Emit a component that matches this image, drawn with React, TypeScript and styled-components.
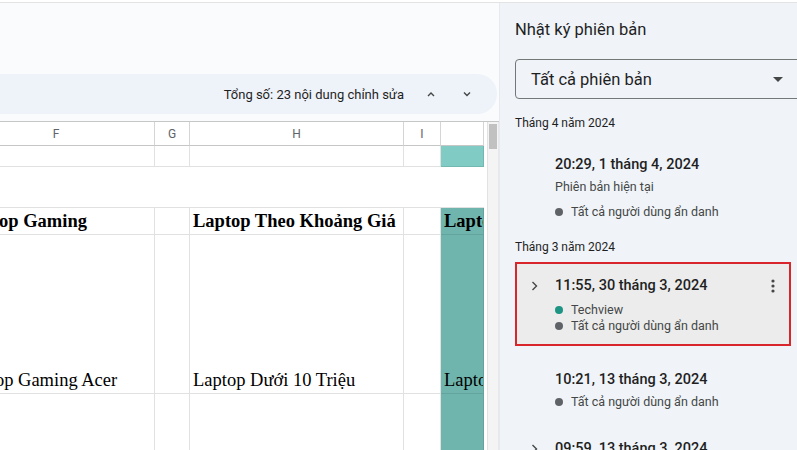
import styled, { createGlobalStyle } from "styled-components";

const Global = createGlobalStyle`
  html, body {
    margin: 0;
    padding: 0;
    background: #ffffff;
    overflow: hidden;
  }
  body {
    font-family: Roboto, "Noto Sans", Arial, sans-serif;
    color: #1f1f1f;
  }
`;

const Page = styled.div`
  width: 797px;
  height: 450px;
  padding-top: 2px;
  box-sizing: border-box;
  overflow: hidden;
`;

const Frame = styled.div`
  display: flex;
  height: 448px;
  border-top: 1px solid #e3e3e3;
`;

const Main = styled.div`
  width: 499px;
  display: flex;
  flex-direction: column;
  background: #f9fbfd;
  overflow: hidden;
`;

const TopArea = styled.div`
  height: 118px;
  flex-shrink: 0;
  display: flex;
  flex-direction: column;
  justify-content: flex-end;
  padding-bottom: 7px;
  box-sizing: border-box;
`;

const FindBar = styled.div`
  height: 40px;
  margin-left: -40px;
  margin-right: 2px;
  border-radius: 0 20px 20px 0;
  background: #eef2f9;
  display: flex;
  align-items: center;
  justify-content: flex-end;
  padding-right: 14px;
  gap: 4px;
`;

const Count = styled.span`
  font-size: 13px;
  color: #1f1f1f;
  margin-right: 7px;
`;

const NavButton = styled.button`
  width: 32px;
  height: 32px;
  border: none;
  background: transparent;
  display: flex;
  align-items: center;
  justify-content: center;
  padding: 0;
  color: #444746;
`;

const SheetWrap = styled.div`
  flex: 1;
  display: flex;
  background: #ffffff;
  border-top: 1px solid #c4c7c5;
  overflow: hidden;
`;

const Viewport = styled.div`
  flex: 1;
  overflow: hidden;
`;

const Grid = styled.div`
  display: grid;
  margin-left: -42px;
  grid-template-columns: 197px 35px 214px 37px 43px;
  grid-template-rows: 24px 21px 41px 27px 159px 80px;
`;

const HeadCell = styled.div`
  border-right: 1px solid #d5d5d5;
  border-bottom: 1px solid #c4c7c5;
  display: flex;
  align-items: center;
  justify-content: center;
  font-size: 12px;
  color: #5f6368;
  box-sizing: border-box;
`;

const Cell = styled.div<{ $fill?: string; $bold?: boolean; $bottom?: boolean; $line?: string }>`
  border-right: 1px solid ${(p) => p.$line || "#e1e1e1"};
  border-bottom: 1px solid ${(p) => p.$line || "#e1e1e1"};
  background: ${(p) => p.$fill || "#ffffff"};
  font-family: "Liberation Serif", "Times New Roman", serif;
  font-size: 18.5px;
  font-weight: ${(p) => (p.$bold ? 700 : 400)};
  color: #000;
  white-space: nowrap;
  overflow: hidden;
  display: flex;
  align-items: ${(p) => (p.$bottom ? "flex-end" : "center")};
  padding: 0 0 ${(p) => (p.$bottom ? "2px" : "0")} 3px;
  box-sizing: border-box;
`;

const MergedRow = styled.div`
  grid-column: 1 / -1;
  border-bottom: 1px solid #e1e1e1;
  background: #ffffff;
`;

const Scrollbar = styled.div`
  width: 12px;
  margin-left: 3px;
  background: #f4f4f4;
  border-left: 1px solid #e2e2e2;
  border-right: 1px solid #e8e8e8;
  padding-top: 2px;
  box-sizing: border-box;
`;

const Thumb = styled.div`
  width: 8px;
  height: 25px;
  margin-left: 1px;
  background: #c1c1c1;
`;

const Panel = styled.aside`
  flex: 1;
  background: #f0f4f9;
  border-left: 1px solid #e6e9ee;
  padding: 15px 0 0 15px;
  overflow: hidden;
  display: flex;
  flex-direction: column;
  & > * {
    flex-shrink: 0;
  }
`;

const PanelTitle = styled.h2`
  margin: 0;
  font-size: 16.5px;
  line-height: 24px;
  font-weight: 400;
  color: #1f1f1f;
`;

const Select = styled.div`
  margin-top: 17px;
  width: 300px;
  height: 40px;
  box-sizing: border-box;
  border: 1px solid #747775;
  border-radius: 4px;
  display: flex;
  align-items: center;
  padding-left: 15px;
  font-size: 16.5px;
  color: #1f1f1f;
  position: relative;
`;

const Caret = styled.span`
  position: absolute;
  left: 257px;
  top: 17px;
  width: 0;
  height: 0;
  border-left: 5px solid transparent;
  border-right: 5px solid transparent;
  border-top: 5px solid #444746;
`;

const MonthLabel = styled.div<{ $top: number }>`
  margin-top: ${(p) => p.$top}px;
  font-size: 12px;
  line-height: 16px;
  color: #1f1f1f;
`;

const Item = styled.div<{ $selected?: boolean; $top: number }>`
  margin-top: ${(p) => p.$top}px;
  width: 276px;
  box-sizing: border-box;
  display: grid;
  grid-template-columns: 38px 1fr 24px;
  padding: ${(p) => (p.$selected ? "12px 0 10px" : "11px 0 10px")};
  background: ${(p) => (p.$selected ? "#ececec" : "transparent")};
  border: 2px solid ${(p) => (p.$selected ? "#d9262c" : "transparent")};
`;

const Expander = styled.div`
  height: 20px;
  display: flex;
  align-items: center;
  padding-left: 12px;
  color: #444746;
`;

const ItemBody = styled.div`
  display: flex;
  flex-direction: column;
`;

const ItemTitle = styled.div<{ $gap?: number }>`
  font-size: 14.5px;
  line-height: 20px;
  font-weight: 500;
  color: #1f1f1f;
  margin-bottom: ${(p) => p.$gap ?? 4}px;
`;

const Current = styled.div`
  font-size: 12.5px;
  line-height: 16px;
  color: #444746;
  margin-bottom: 9px;
`;

const User = styled.div<{ $color: string }>`
  font-size: 12.5px;
  line-height: 16px;
  color: #444746;
  display: flex;
  align-items: center;
  gap: 8px;
  &::before {
    content: "";
    width: 8px;
    height: 8px;
    border-radius: 50%;
    background: ${(p) => p.$color};
  }
`;

const More = styled.div`
  height: 20px;
  display: flex;
  align-items: center;
  justify-content: center;
  color: #444746;
  padding-right: 8px;
`;

const Chevron = ({ dir }: { dir: "up" | "down" | "right" }) => {
  const pts =
    dir === "up" ? "3,8 6,5 9,8" : dir === "down" ? "3,4.5 6,7.5 9,4.5" : "3.5,2 7.5,6 3.5,10";
  return (
    <svg width="12" height="12" viewBox="0 0 12 12" aria-hidden="true">
      <polyline points={pts} fill="none" stroke="currentColor" strokeWidth="1.4" />
    </svg>
  );
};

const Dots = () => (
  <svg width="4" height="14" viewBox="0 0 4 14" aria-hidden="true">
    <circle cx="2" cy="2" r="1.6" fill="currentColor" />
    <circle cx="2" cy="7" r="1.6" fill="currentColor" />
    <circle cx="2" cy="12" r="1.6" fill="currentColor" />
  </svg>
);

const GRAY = "#5f6368";
const TEAL = "#1e9484";

export default function App() {
  return (
    <Page>
      <Global />
      <Frame>
        <Main>
          <TopArea>
            <FindBar>
              <Count>Tổng số: 23 nội dung chỉnh sửa</Count>
              <NavButton><Chevron dir="up" /></NavButton>
              <NavButton><Chevron dir="down" /></NavButton>
            </FindBar>
          </TopArea>
          <SheetWrap>
            <Viewport>
              <Grid>
                <HeadCell>F</HeadCell>
                <HeadCell>G</HeadCell>
                <HeadCell>H</HeadCell>
                <HeadCell>I</HeadCell>
                <HeadCell />

                <Cell />
                <Cell />
                <Cell />
                <Cell />
                <Cell $fill="#80cbc4" $line="#72b8b1" />

                <MergedRow />

                <Cell $bold>Laptop Gaming</Cell>
                <Cell />
                <Cell $bold>Laptop Theo Khoảng Giá</Cell>
                <Cell />
                <Cell $bold $fill="#6fb5ad" $line="#63a59e">Laptop Theo Hãng</Cell>

                <Cell $bottom>Laptop Gaming Acer</Cell>
                <Cell />
                <Cell $bottom>Laptop Dưới 10 Triệu</Cell>
                <Cell />
                <Cell $bottom $fill="#6fb5ad" $line="#63a59e">Laptop Acer</Cell>

                <Cell />
                <Cell />
                <Cell />
                <Cell />
                <Cell $fill="#6fb5ad" $line="#63a59e" />
              </Grid>
            </Viewport>
            <Scrollbar>
              <Thumb />
            </Scrollbar>
          </SheetWrap>
        </Main>

        <Panel>
          <PanelTitle>Nhật ký phiên bản</PanelTitle>
          <Select>
            Tất cả phiên bản
            <Caret />
          </Select>

          <MonthLabel $top={16}>Tháng 4 năm 2024</MonthLabel>
          <Item $top={11}>
            <Expander />
            <ItemBody>
              <ItemTitle>20:29, 1 tháng 4, 2024</ItemTitle>
              <Current>Phiên bản hiện tại</Current>
              <User $color={GRAY}>Tất cả người dùng ẩn danh</User>
            </ItemBody>
          </Item>

          <MonthLabel $top={7}>Tháng 3 năm 2024</MonthLabel>
          <Item $top={7} $selected>
            <Expander><Chevron dir="right" /></Expander>
            <ItemBody>
              <ItemTitle $gap={6}>11:55, 30 tháng 3, 2024</ItemTitle>
              <User $color={TEAL}>Techview</User>
              <User $color={GRAY}>Tất cả người dùng ẩn danh</User>
            </ItemBody>
            <More><Dots /></More>
          </Item>

          <Item $top={11}>
            <Expander />
            <ItemBody>
              <ItemTitle>10:21, 13 tháng 3, 2024</ItemTitle>
              <User $color={GRAY}>Tất cả người dùng ẩn danh</User>
            </ItemBody>
          </Item>

          <Item $top={4}>
            <Expander><Chevron dir="right" /></Expander>
            <ItemBody>
              <ItemTitle>09:59, 13 tháng 3, 2024</ItemTitle>
              <User $color={GRAY}>Tất cả người dùng ẩn danh</User>
            </ItemBody>
          </Item>
        </Panel>
      </Frame>
    </Page>
  );
}
